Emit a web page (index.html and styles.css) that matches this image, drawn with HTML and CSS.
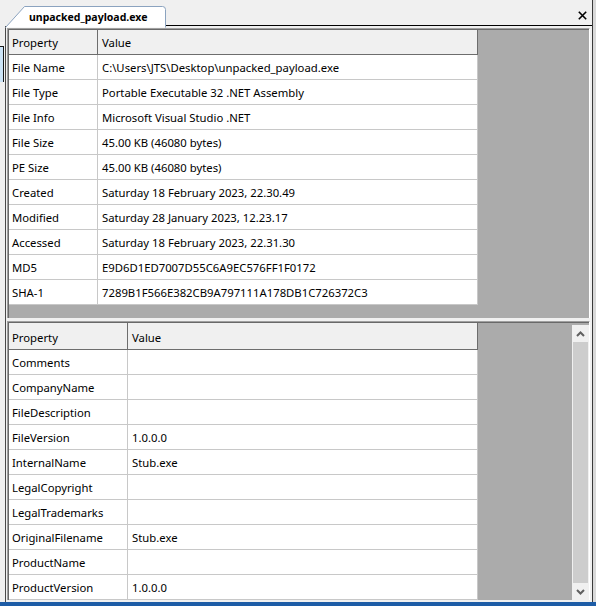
FILE: index.html
```html
<!DOCTYPE html>
<html>
<head>
<meta charset="utf-8">
<link rel="stylesheet" href="styles.css">
</head>
<body>
<div class="screen">
  <div class="desk-left"><div class="behind"></div></div>
  <div class="win">
    <div class="tabbar">
      <div class="tab">
        <svg class="tab-shape" width="162" height="22" viewBox="0 0 162 22"><path d="M0.5 21.5 L19.5 0.5 L157.5 0.5 Q160.5 0.5 160.5 3.5 L160.5 21.5" fill="#ffffff" stroke="#8ba3bf" stroke-width="1"/></svg>
        <span class="tab-title">unpacked_payload.exe</span>
      </div>
      <div class="tabrest">
        <svg class="close" width="9" height="9" viewBox="0 0 9 9"><path d="M0.8 0.8 L8.2 8.2 M8.2 0.8 L0.8 8.2" stroke="#000" stroke-width="1.6" fill="none"/></svg>
      </div>
    </div>
    <div class="body">
      <div class="panel p1">
        <div class="inner">
          <div class="grid g1">
            <div class="row head"><div class="c k">Property</div><div class="c v">Value</div></div>
            <div class="row"><div class="c k">File Name</div><div class="c v">C:\Users\JTS\Desktop\unpacked_payload.exe</div></div>
            <div class="row"><div class="c k">File Type</div><div class="c v">Portable Executable 32 .NET Assembly</div></div>
            <div class="row"><div class="c k">File Info</div><div class="c v">Microsoft Visual Studio .NET</div></div>
            <div class="row"><div class="c k">File Size</div><div class="c v">45.00 KB (46080 bytes)</div></div>
            <div class="row"><div class="c k">PE Size</div><div class="c v">45.00 KB (46080 bytes)</div></div>
            <div class="row"><div class="c k">Created</div><div class="c v">Saturday 18 February 2023, 22.30.49</div></div>
            <div class="row"><div class="c k">Modified</div><div class="c v">Saturday 28 January 2023, 12.23.17</div></div>
            <div class="row"><div class="c k">Accessed</div><div class="c v">Saturday 18 February 2023, 22.31.30</div></div>
            <div class="row"><div class="c k">MD5</div><div class="c v">E9D6D1ED7007D55C6A9EC576FF1F0172</div></div>
            <div class="row"><div class="c k">SHA-1</div><div class="c v">7289B1F566E382CB9A797111A178DB1C726372C3</div></div>
          </div>
        </div>
      </div>
      <div class="panel p2">
        <div class="inner">
          <div class="grid g2">
            <div class="row head"><div class="c k">Property</div><div class="c v">Value</div></div>
            <div class="row"><div class="c k">Comments</div><div class="c v"></div></div>
            <div class="row"><div class="c k">CompanyName</div><div class="c v"></div></div>
            <div class="row"><div class="c k">FileDescription</div><div class="c v"></div></div>
            <div class="row"><div class="c k">FileVersion</div><div class="c v">1.0.0.0</div></div>
            <div class="row"><div class="c k">InternalName</div><div class="c v">Stub.exe</div></div>
            <div class="row"><div class="c k">LegalCopyright</div><div class="c v"></div></div>
            <div class="row"><div class="c k">LegalTrademarks</div><div class="c v"></div></div>
            <div class="row"><div class="c k">OriginalFilename</div><div class="c v">Stub.exe</div></div>
            <div class="row"><div class="c k">ProductName</div><div class="c v"></div></div>
            <div class="row"><div class="c k">ProductVersion</div><div class="c v">1.0.0.0</div></div>
          </div>
          <div class="vscroll">
            <div class="sbtn"><svg width="9" height="6" viewBox="0 0 9 6"><path d="M1 5 L4.5 1.5 L8 5" stroke="#606060" stroke-width="2" fill="none"/></svg></div>
            <div class="thumb"></div>
            <div class="sbtn"><svg width="9" height="6" viewBox="0 0 9 6"><path d="M1 1 L4.5 4.5 L8 1" stroke="#606060" stroke-width="2" fill="none"/></svg></div>
          </div>
        </div>
      </div>
    </div>
  </div>
  <div class="desk-right"></div>
</div>
<div class="taskbar"></div>
</body>
</html>
```
FILE: styles.css
```css
* { box-sizing: border-box; }
html, body { margin: 0; padding: 0; }
body {
  width: 596px;
  height: 606px;
  overflow: hidden;
  background: #f0f0f0;
  font-family: "Noto Sans", "Segoe UI", sans-serif;
  font-size: 11.3px;
  color: #000;
}
.screen {
  display: flex;
  height: 602px;
}
.desk-left {
  width: 5px;
  padding-top: 46px;
  background: #f0f0f0;
}
.behind {
  width: 4px;
  height: 36px;
  background: #cce4f7;
  border-top: 1px solid #1a1a1a;
  border-right: 1px solid #1a1a1a;
}
.win {
  width: 588px;
  display: flex;
  flex-direction: column;
  border-right: 1px solid #3a3a3a;
}
.tabbar {
  height: 26px;
  display: flex;
  align-items: flex-end;
}
.tab {
  position: relative;
  width: 161px;
  height: 21px;
  margin-bottom: -1px;
  display: flex;
  align-items: center;
  padding-left: 24px;
}
.tab-shape {
  position: absolute;
  left: 0;
  top: 0;
}
.tab-title {
  position: relative;
  font-weight: bold;
  font-size: 10.5px;
  line-height: 20px;
}
.tabrest {
  flex: 1;
  height: 21px;
  border-bottom: 1px solid #000;
  display: flex;
  justify-content: flex-end;
  align-items: center;
  padding-right: 5px;
}
.close { display: block; margin-top: 1px; }
.body {
  flex: 1;
  display: flex;
  flex-direction: column;
  gap: 3px;
  padding: 2px 2px 2px 1px;
  border-left: 1px solid #4a4a4a;
}
.panel {
  background: #ababab;
  border-top: 1px solid #a0a0a0;
  border-left: 1px solid #a0a0a0;
  border-right: 1px solid #ffffff;
}
.p1 { height: 290px; }
.p2 { height: 279px; }
.inner {
  height: 100%;
  border-top: 1px solid #696969;
  border-left: 1px solid #696969;
  display: flex;
  align-items: flex-start;
}
.grid {
  display: flex;
  flex-direction: column;
}
.row {
  display: flex;
  height: 25px;
}
.c {
  height: 100%;
  padding-top: 2px;
  line-height: 22px;
  padding-left: 3px;
  white-space: nowrap;
  overflow: hidden;
  border-right: 1px solid #c8c8c8;
  border-bottom: 1px solid #c8c8c8;
  background: #ffffff;
}
.row.head .c {
  background: #f0f0f0;
  border-right-color: #6d6d6d;
  border-bottom-color: #6d6d6d;
}
.g2 .row.head { height: 27px; }
.g2 .row.head .c { padding-top: 4px; line-height: 22px; }
.g1 .k { width: 89px; }
.g1 .v { width: 380px; padding-left: 4px; }
.g2 .k { width: 119px; }
.g2 .v { width: 350px; padding-left: 4px; }
.vscroll {
  margin-left: auto;
  margin-top: 2px;
  width: 17px;
  height: 275px;
  background: #f0f0f0;
  display: flex;
  flex-direction: column;
}
.sbtn {
  height: 17px;
  display: flex;
  align-items: center;
  justify-content: center;
}
.thumb {
  flex: 1;
  margin: 0 1px;
  background: #cdcdcd;
}
.desk-right {
  width: 3px;
  background: #d9d9d9;
}
.taskbar {
  height: 4px;
  background: #1d5ca6;
}
```
